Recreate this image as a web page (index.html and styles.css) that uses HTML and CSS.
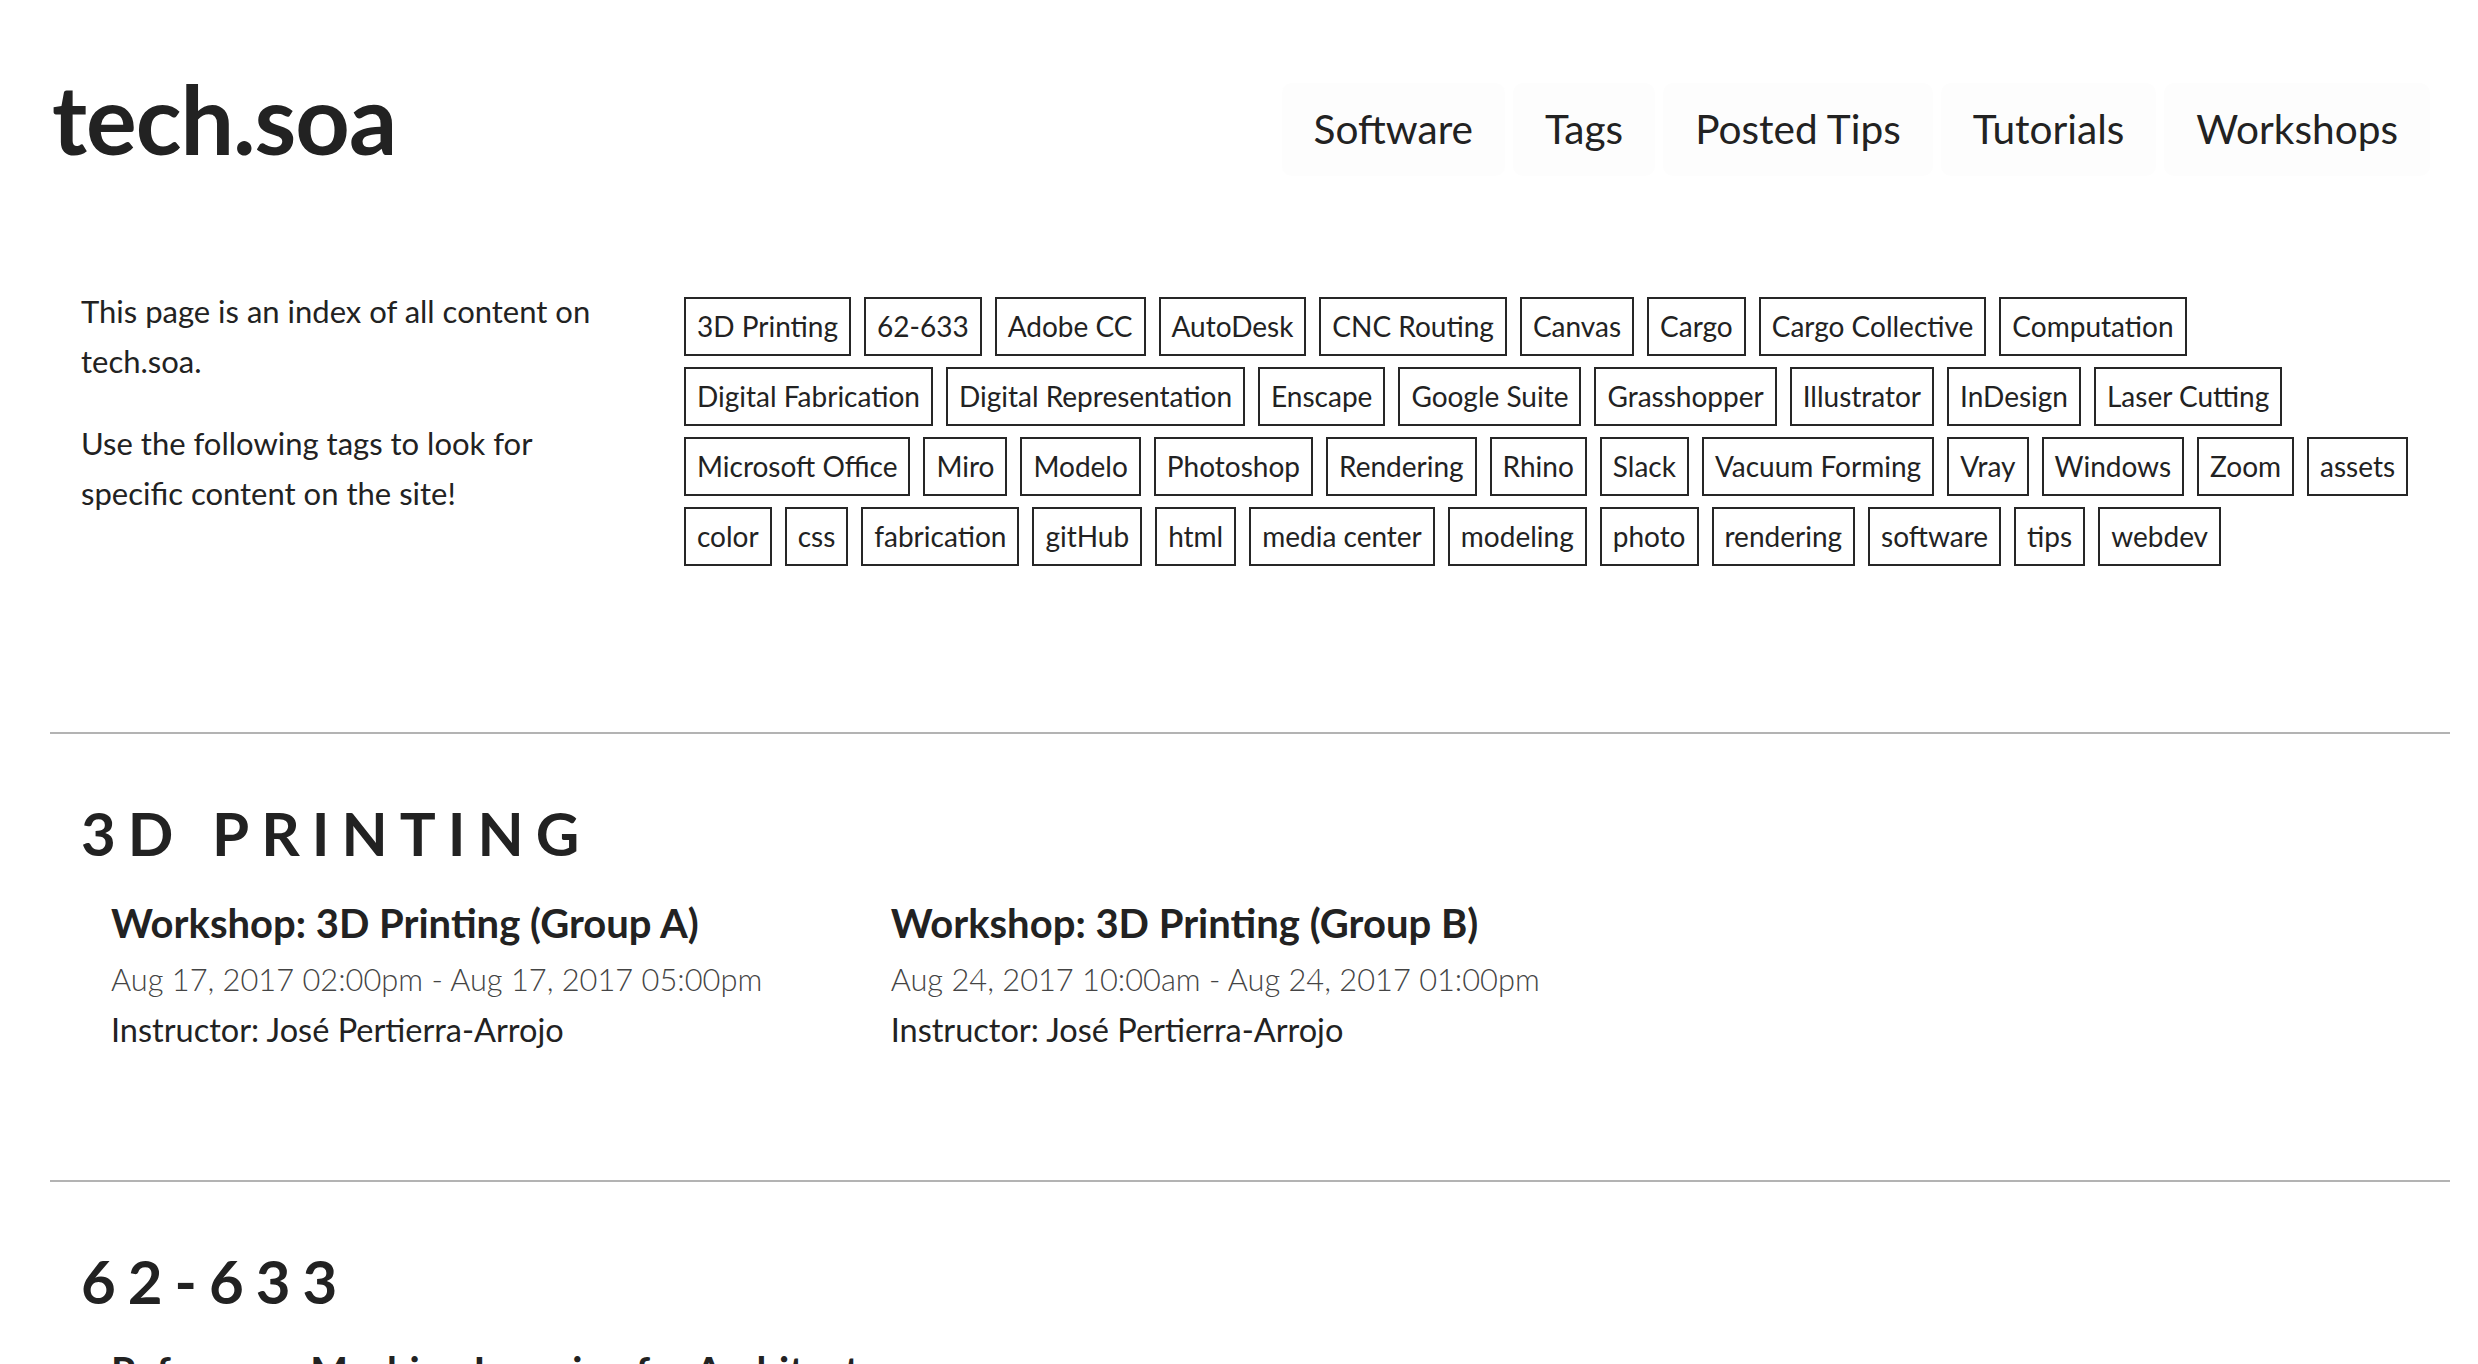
FILE: index.html
```html
<!DOCTYPE html>
<html lang="en">
<head>
<meta charset="utf-8">
<title>tech.soa</title>
<link rel="stylesheet" href="styles.css">
</head>
<body>
<header class="site-header">
  <a class="logo" href="#">tech.soa</a>
  <nav class="main-nav">
    <a class="nav-item" href="#">Software</a>
    <a class="nav-item" href="#">Tags</a>
    <a class="nav-item" href="#">Posted Tips</a>
    <a class="nav-item" href="#">Tutorials</a>
    <a class="nav-item" href="#">Workshops</a>
  </nav>
</header>

<section class="intro">
  <div class="intro-text">
    <p>This page is an index of all content on tech.soa.</p>
    <p>Use the following tags to look for specific content on the site!</p>
  </div>
  <div class="tags">
    <a class="tag" href="#">3D Printing</a>
    <a class="tag" href="#">62-633</a>
    <a class="tag" href="#">Adobe CC</a>
    <a class="tag" href="#">AutoDesk</a>
    <a class="tag" href="#">CNC Routing</a>
    <a class="tag" href="#">Canvas</a>
    <a class="tag" href="#">Cargo</a>
    <a class="tag" href="#">Cargo Collective</a>
    <a class="tag" href="#">Computation</a>
    <a class="tag" href="#">Digital Fabrication</a>
    <a class="tag" href="#">Digital Representation</a>
    <a class="tag" href="#">Enscape</a>
    <a class="tag" href="#">Google Suite</a>
    <a class="tag" href="#">Grasshopper</a>
    <a class="tag" href="#">Illustrator</a>
    <a class="tag" href="#">InDesign</a>
    <a class="tag" href="#">Laser Cutting</a>
    <a class="tag" href="#">Microsoft Office</a>
    <a class="tag" href="#">Miro</a>
    <a class="tag" href="#">Modelo</a>
    <a class="tag" href="#">Photoshop</a>
    <a class="tag" href="#">Rendering</a>
    <a class="tag" href="#">Rhino</a>
    <a class="tag" href="#">Slack</a>
    <a class="tag" href="#">Vacuum Forming</a>
    <a class="tag" href="#">Vray</a>
    <a class="tag" href="#">Windows</a>
    <a class="tag" href="#">Zoom</a>
    <a class="tag" href="#">assets</a>
    <a class="tag" href="#">color</a>
    <a class="tag" href="#">css</a>
    <a class="tag" href="#">fabrication</a>
    <a class="tag" href="#">gitHub</a>
    <a class="tag" href="#">html</a>
    <a class="tag" href="#">media center</a>
    <a class="tag" href="#">modeling</a>
    <a class="tag" href="#">photo</a>
    <a class="tag" href="#">rendering</a>
    <a class="tag" href="#">software</a>
    <a class="tag" href="#">tips</a>
    <a class="tag" href="#">webdev</a>
  </div>
</section>

<main class="index">
  <section class="group">
    <h2 class="group-title">3D Printing</h2>
    <div class="cards">
      <article class="card">
        <h3 class="card-title">Workshop: 3D Printing (Group A)</h3>
        <div class="card-date">Aug 17, 2017 02:00pm - Aug 17, 2017 05:00pm</div>
        <div class="card-meta">Instructor: José Pertierra-Arrojo</div>
      </article>
      <article class="card">
        <h3 class="card-title">Workshop: 3D Printing (Group B)</h3>
        <div class="card-date">Aug 24, 2017 10:00am - Aug 24, 2017 01:00pm</div>
        <div class="card-meta">Instructor: José Pertierra-Arrojo</div>
      </article>
    </div>
  </section>
  <section class="group">
    <h2 class="group-title">62-633</h2>
    <div class="cards">
      <article class="card">
        <h3 class="card-title">Reference: Machine Learning for Architects</h3>
        <div class="card-date">Posted Tip</div>
      </article>
    </div>
  </section>
</main>
</body>
</html>
```

FILE: styles.css
```css
html, body {
  margin: 0;
  padding: 0;
  background: #ffffff;
}

body {
  font-family: Lato, "Open Sans", sans-serif;
  color: #222222;
}

a {
  color: inherit;
  text-decoration: none;
}

.site-header {
  display: flex;
  justify-content: space-between;
  align-items: flex-start;
  padding: 0 48px 0 52px;
}

.logo {
  margin-top: 71px;
  font-size: 95px;
  line-height: 1;
  font-weight: 700;
  letter-spacing: -1px;
}

.main-nav {
  display: flex;
  gap: 8px;
  margin-top: 83px;
}

.nav-item {
  display: block;
  padding: 22px 32px 23px;
  font-size: 40.6px;
  line-height: 48px;
  background: #fdfdfd;
  border-radius: 10px;
}

.intro {
  display: flex;
  align-items: flex-start;
  padding: 110px 48px 0 81px;
}

.intro-text {
  flex: 0 0 540px;
  margin-right: 63px;
}

.intro-text p {
  margin: 0 0 32px;
  font-size: 31px;
  line-height: 50px;
}

.tags {
  flex: 1;
  display: flex;
  flex-wrap: wrap;
  align-content: flex-start;
  gap: 11px 13px;
  margin-top: 11px;
}

.tag {
  display: block;
  border: 2px solid #262626;
  padding: 10px 11px;
  font-size: 28px;
  line-height: 35px;
}

.index {
  margin-top: 166px;
}

.group {
  margin: 0 28px 0 50px;
  border-top: 2px solid #b3b3b3;
  padding: 63px 0 132px 31px;
}

.group-title {
  margin: 0;
  font-size: 60px;
  line-height: 72px;
  font-weight: 700;
  letter-spacing: 12px;
  text-transform: uppercase;
}

.cards {
  display: grid;
  grid-template-columns: repeat(3, 1fr);
  margin-top: 31px;
  padding-left: 30px;
}

.card-title {
  margin: 0;
  font-size: 40px;
  line-height: 46px;
  font-weight: 700;
}

.card-date {
  margin-top: 16px;
  font-size: 30.8px;
  line-height: 36px;
  font-weight: 300;
  color: #444444;
}

.card-meta {
  margin-top: 14px;
  font-size: 32.5px;
  line-height: 36px;
}
```
